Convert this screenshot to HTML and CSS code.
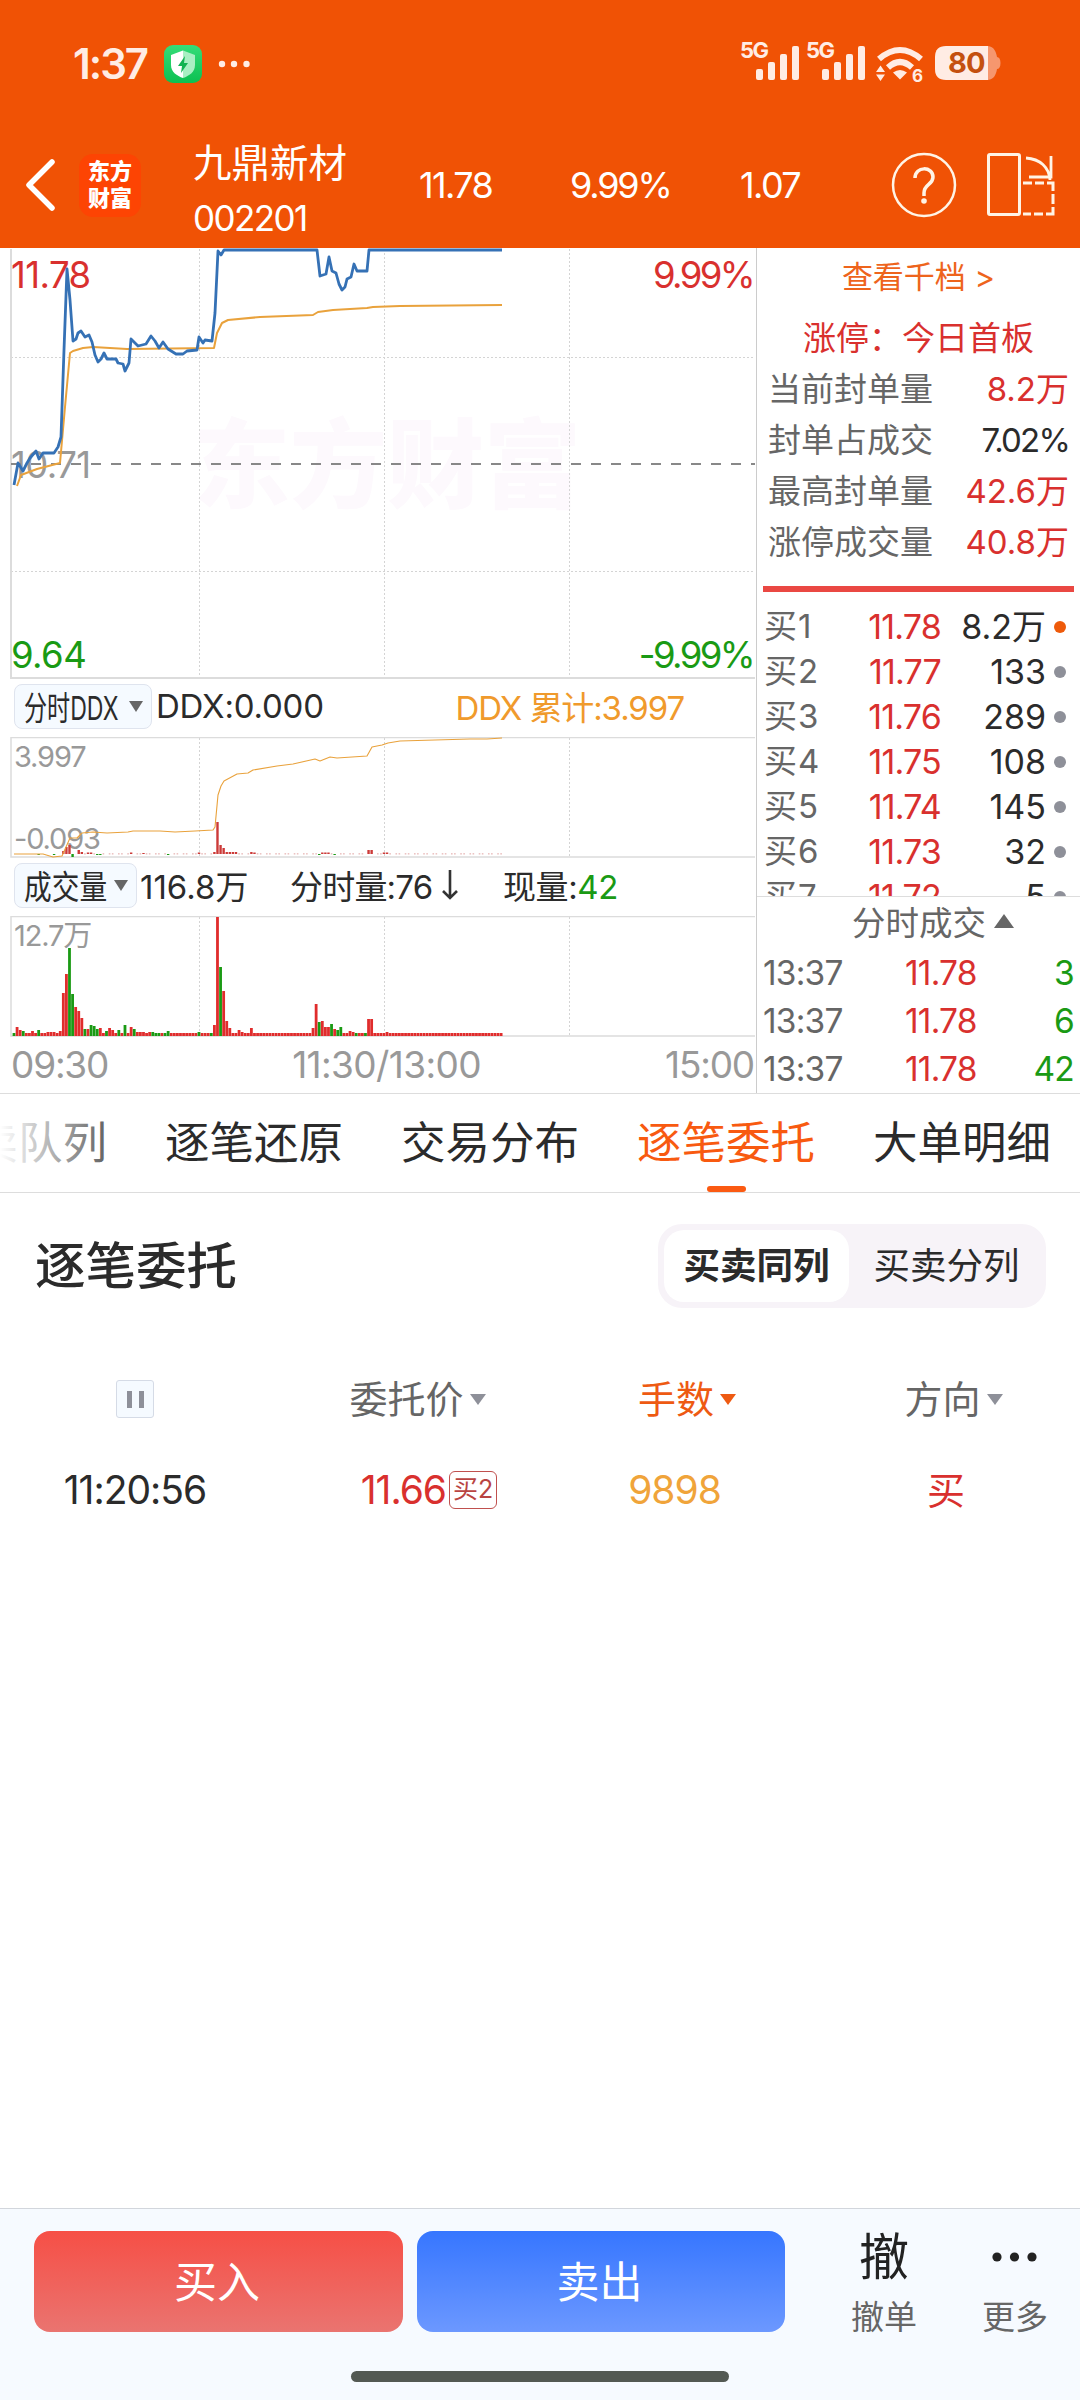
FILE: index.html
```html
<!DOCTYPE html>
<html lang="zh-CN">
<head>
  <meta charset="UTF-8">
  <meta name="viewport" content="width=device-width, initial-scale=1.0">
  <title>九鼎新材 002201</title>
  <link rel="stylesheet" href="styles.css">
</head>
<body>
  <div class="statusbar">
    <span class="statusbar__time">1:37</span>
    <svg class="statusbar__shield" width="38" height="38" viewBox="0 0 38 38">
      <defs>
        <linearGradient id="shield-bg" x1="0" y1="0" x2="0" y2="1">
          <stop offset="0" stop-color="#35dc78"/>
          <stop offset="1" stop-color="#0cc051"/>
        </linearGradient>
      </defs>
      <rect width="38" height="38" rx="9" fill="url(#shield-bg)"/>
      <path d="M19 5.500L31 10v10c0 7-6 11-12 13z" fill="#a9efc3"/>
      <path d="M19 5.500L7 10v10c0 7 6 11 12 13z" fill="#fff"/>
      <path d="M21 11l-7 10h4l-1 7 7-10h-4z" fill="#12b352"/>
    </svg>
    <svg class="statusbar__dots" width="32" height="8" viewBox="0 0 32 8" fill="#ffece4">
      <circle cx="4" cy="4" r="3.200"/><circle cx="16" cy="4" r="3.200"/><circle cx="28.500" cy="4" r="3.200"/>
    </svg>
    <svg class="statusbar__system" width="270" height="48" viewBox="735 38 270 48" fill="#ffece4">
      <text class="net" x="740" y="58">5G</text>
      <rect x="756" y="69" width="7" height="11" rx="2"/>
      <rect x="768" y="62" width="7" height="18" rx="2"/>
      <rect x="780" y="54" width="7" height="26" rx="2"/>
      <rect x="792" y="46" width="7" height="34" rx="2"/>
      <text class="net" x="806" y="58">5G</text>
      <rect x="822" y="69" width="7" height="11" rx="2"/>
      <rect x="834" y="62" width="7" height="18" rx="2"/>
      <rect x="846" y="54" width="7" height="26" rx="2"/>
      <rect x="858" y="46" width="7" height="34" rx="2"/>
      <path d="M879 59q21-18 42 0M888 67.500q12-11 24 0" fill="none" stroke="#ffece4" stroke-width="6"/>
      <path d="M893 72.500q7-5 14 0l-7 7z"/>
      <path d="M876 72l4.500-6.500L885 72zM876 74.500l4.500 6.500 4.500-6.500z"/>
      <text class="wifi-gen" x="912" y="81.500">6</text>
      <path d="M988 46c6 1 8 5 9 11 2 0 3.500 2 3.500 6s-1.500 6-3.500 6c-1 6-3 10-9 11z" fill="#f6976e"/>
      <path d="M946 46h42v34h-42q-11 0-11-11v-12q0-11 11-11z"/>
      <text class="battery" x="948" y="73">80</text>
    </svg>
  </div>

  <div class="header">
    <svg class="header__back" width="32" height="56" viewBox="0 0 32 56">
      <path d="M28 5L5 28l23 23" fill="none" stroke="#fff" stroke-width="5.500" stroke-linecap="round" stroke-linejoin="round"/>
    </svg>
    <div class="header__logo">东方<br>财富</div>
    <div class="header__stock">
      <div class="header__name">九鼎新材</div>
      <div class="header__code">002201</div>
    </div>
    <span class="header__price">11.78</span>
    <span class="header__percent">9.99%</span>
    <span class="header__change">1.07</span>
    <svg class="header__help" width="66" height="66" viewBox="0 0 66 66" fill="none" stroke="#fff4e6" stroke-width="2.500">
      <circle cx="33" cy="33" r="31"/>
      <path d="M24 26c0-12 18-12 18-1 0 8-9 7-9 16v3" stroke-width="3.500"/>
      <circle cx="33" cy="49" r="2.800" fill="#fff4e6" stroke="none"/>
    </svg>
    <svg class="header__rotate" width="70" height="66" viewBox="0 0 70 66" fill="none" stroke="#fff4e6" stroke-width="3">
      <rect x="2.500" y="2.500" width="31" height="60" rx="1.500"/>
      <path d="M40 6c14 1 23 9 24 22M43 25h22V4" stroke-width="2.800"/>
      <path d="M37 31h9M49 31h9M61 31h6v8M67 42v10M67 55v7h-7M57 62h-9M45 62h-8"/>
    </svg>
  </div>

  <div class="quote">
    <div class="charts">
      <svg class="chart" width="756" height="431" viewBox="0 248 756 431">
        <text class="watermark" x="193" y="500" textLength="388">东方财富</text>
        <path class="grid" d="M199.500 249v428M384.500 249v428M569.500 249v428M11 357.500h744M11 571.500h744"/>
        <path class="frame" d="M11 249v429h744"/>
        <text class="level up" x="11" y="288">11.78</text>
        <text class="level flat" x="11" y="478">10.71</text>
        <text class="level down" x="11" y="668">9.64</text>
        <text class="level percent up" x="753" y="288">9.99%</text>
        <text class="level percent down" x="753" y="668">-9.99%</text>
        <path d="M11 464h744" stroke="#888" stroke-width="2" stroke-dasharray="10 10"/>
        <polyline class="average" points="17,486 21,475 37,469 60,463 65,407 70,353 73,351 83,348 93,347 127,349 214,348 217,333 222,323 228,320 260,317 313,315 318,312 333,310 367,308 373,307 400,306 502,305"/>
        <polyline class="price" points="14,485 18,463 23,471 27,463 30,458 36,451 39,459 43,453 54,453 58,447 61,437 64,350 67,269 70,300 73,341 76,339 78,333 81,331 85,337 89,335 92,342 95,355 98,362 101,359 104,353 107,359 116,359 118,363 123,364 125,371 129,363 131,339 138,346 146,344 151,336 155,341 159,348 163,342 168,349 176,354 183,354 187,351 197,350 199,337 203,343 205,340 212,341 215,313 218,251 221,255 224,250 317,250 320,276 326,274 329,257 332,271 336,273 339,284 342,290 345,287 347,279 351,277 354,264 357,271 367,271 369,250 502,250"/>
      </svg>

      <div class="indicator">
        <div class="chip chip--ddx"><span class="chip__text">分时DDX</span><i class="caret"></i></div>
        <span class="indicator__ddx">DDX:0.000</span>
        <span class="indicator__sum">DDX 累计:3.997</span>
      </div>

      <svg class="chart" width="756" height="121" viewBox="0 737 756 121">
        <path class="grid" d="M199.500 738v119M384.500 738v119M569.500 738v119"/>
        <path class="frame frame--thin" d="M755 737.500H11V857h744"/>
        <text class="scale" x="14" y="767">3.997</text>
        <text class="scale" x="14" y="849">-0.093</text>
        <g id="ddx-bars"></g>
        <polyline class="average average--thin" points="14,854 43,854 53,857 62,856 70,838 77,838 82,833 93,832 107,833 128,832 133,831 160,831 175,832 195,831 213,830 215,827 218,795 221,786 224,781 237,774 248,773 253,770 277,766 293,764 315,759 320,761 330,757 337,758 367,756 372,747 382,745 388,743 400,741 470,739 487,739 502,738"/>
      </svg>

      <div class="indicator">
        <div class="chip chip--volume"><span class="chip__text">成交量</span><i class="caret"></i></div>
        <span class="indicator__total">116.8万</span>
        <span class="indicator__minute">分时量:76<svg width="18" height="32" viewBox="0 0 18 32" fill="none" stroke="#333" stroke-width="2.600"><path d="M9 1v28M2 22l7 7 7-7"/></svg></span>
        <span class="indicator__current">现量:<b>42</b></span>
      </div>

      <svg class="chart" width="756" height="121" viewBox="0 916 756 121">
        <path class="grid" d="M199.500 917v119M384.500 917v119M569.500 917v119"/>
        <path class="frame frame--thin" d="M755 916.500H11V1036h744"/>
        <text class="scale" x="14" y="946">12.7万</text>
        <g id="volume-bars"></g>
      </svg>

      <div class="axis"><span>09:30</span><span>11:30/13:00</span><span>15:00</span></div>
    </div>

    <div class="depth">
      <div class="depth__more">查看千档 &gt;</div>
      <div class="depth__limit">涨停：今日首板</div>
      <div class="stat"><span>当前封单量</span><span class="up">8.2万</span></div>
      <div class="stat"><span>封单占成交</span><span class="tight">7.02%</span></div>
      <div class="stat"><span>最高封单量</span><span class="up">42.6万</span></div>
      <div class="stat"><span>涨停成交量</span><span class="up">40.8万</span></div>
      <div class="depth__ratio"></div>
      <div class="book">
        <div class="book__row book__row--active"><span>买1</span><span>11.78</span><span>8.2万</span><i></i></div>
        <div class="book__row"><span>买2</span><span>11.77</span><span>133</span><i></i></div>
        <div class="book__row"><span>买3</span><span>11.76</span><span>289</span><i></i></div>
        <div class="book__row"><span>买4</span><span>11.75</span><span>108</span><i></i></div>
        <div class="book__row"><span>买5</span><span>11.74</span><span>145</span><i></i></div>
        <div class="book__row"><span>买6</span><span>11.73</span><span>32</span><i></i></div>
        <div class="book__row"><span>买7</span><span>11.72</span><span>5</span><i></i></div>
      </div>
      <div class="ticks__title">分时成交<i></i></div>
      <div class="tick"><span>13:37</span><span>11.78</span><span>3</span></div>
      <div class="tick"><span>13:37</span><span>11.78</span><span>6</span></div>
      <div class="tick"><span>13:37</span><span>11.78</span><span>42</span></div>
    </div>
  </div>

  <div class="tabs">
    <span class="tab">买卖队列</span>
    <span class="tab">逐笔还原</span>
    <span class="tab">交易分布</span>
    <span class="tab is-active">逐笔委托</span>
    <span class="tab">大单明细</span>
  </div>

  <div class="orders">
    <div class="orders__bar">
      <h2>逐笔委托</h2>
      <div class="segment">
        <span class="segment__item is-active">买卖同列</span>
        <span class="segment__item">买卖分列</span>
      </div>
    </div>
    <div class="orders__row orders__row--head">
      <span><span class="pause"></span></span>
      <span>委托价<i class="caret"></i></span>
      <span class="is-sorted">手数<i class="caret"></i></span>
      <span>方向<i class="caret"></i></span>
    </div>
    <div class="orders__row">
      <span>11:20:56</span>
      <span class="up">11.66<em class="badge">买2</em></span>
      <span class="lots">9898</span>
      <span class="side up">买</span>
    </div>
  </div>

  <div class="footer">
    <div class="footer__actions">
      <button class="button button--buy">买入</button>
      <button class="button button--sell">卖出</button>
      <div class="action"><span class="action__icon">撤</span>撤单</div>
      <div class="action">
        <span class="action__icon"><svg width="48" height="12" viewBox="0 0 48 12" fill="#222"><circle cx="6" cy="6" r="4.600"/><circle cx="23.500" cy="6" r="4.600"/><circle cx="41" cy="6" r="4.600"/></svg></span>更多
      </div>
    </div>
    <div class="footer__home"></div>
  </div>
  <script src="charts.js"></script>
</body>
</html>
```
FILE: styles.css
```css
* {
  box-sizing: border-box;
}

body {
  display: flex;
  flex-direction: column;
  width: 1080px;
  height: 2400px;
  margin: 0;
  overflow: hidden;
  background: #fff;
  color: #2b2b2b;
  font-family: Inter, "Noto Sans CJK SC", sans-serif;
  white-space: nowrap;
}

svg {
  display: block;
  flex: none;
}

.up {
  color: #d9302e;
  fill: #d9302e;
}

.down {
  fill: #1a9a14;
}

.flat {
  fill: #999;
}

/* status bar */

.statusbar {
  display: flex;
  align-items: center;
  height: 111px;
  padding: 16px 75px 0 73px;
  background: #f05205;
}

.statusbar__time {
  width: 91px;
  color: #ffece4;
  font-size: 42px;
  font-weight: 600;
  letter-spacing: -2px;
}

.statusbar__dots {
  margin-left: 16px;
}

.statusbar__system {
  margin-left: auto;
  margin-top: -3px;
}

.net {
  font-size: 22px;
  font-weight: 700;
  letter-spacing: -1.5px;
}

.wifi-gen {
  font-size: 17px;
  font-weight: 700;
}

.battery {
  fill: #c4500f;
  font-size: 29px;
  font-weight: 700;
  letter-spacing: -1px;
}

/* header */

.header {
  display: grid;
  grid-template-columns: 55px 114px 226px 151px 170px 151px 95px 70px;
  align-items: center;
  height: 137px;
  padding: 11px 0 0 24px;
  background: #f05205;
  color: #fff;
  font-size: 36px;
  letter-spacing: -1.6px;
}

.header__percent {
  letter-spacing: -2.2px;
}

.header__logo {
  width: 62px;
  height: 63px;
  padding-top: 4px;
  border-radius: 14px;
  background: #fd4403;
  font-size: 22px;
  font-weight: 900;
  line-height: 27px;
  letter-spacing: 0;
  text-align: center;
}

.header__name {
  height: 56px;
  font-size: 38.5px;
  line-height: 56px;
  letter-spacing: 0;
}

.header__code {
  height: 54px;
  font-size: 35px;
  line-height: 54px;
}

.header__stock {
  margin-top: 9px;
}

/* quote */

.quote {
  display: flex;
  height: 846px;
  border-bottom: 1px solid #ddd;
}

.charts {
  width: 756px;
}

.chart text {
  letter-spacing: -.04em;
}

.chart .watermark {
  fill: #fdf9fd;
  font-size: 97px;
  font-weight: 900;
  letter-spacing: 0;
}

.grid {
  fill: none;
  stroke: #d4d4d4;
  stroke-dasharray: 2 2;
}

.frame {
  fill: none;
  stroke: #dcdcdc;
  stroke-width: 2;
}

.frame--thin {
  stroke-width: 1.5;
}

.chart .level {
  font-size: 36.5px;
  letter-spacing: -.6px;
}

.chart .percent {
  letter-spacing: -2.6px;
  text-anchor: end;
}

.scale {
  fill: #999;
  font-size: 29px;
}

.price {
  fill: none;
  stroke: #3571b5;
  stroke-width: 2.8;
  stroke-linejoin: round;
}

.average {
  fill: none;
  stroke: #e9a23c;
  stroke-width: 2;
  stroke-linejoin: round;
}

.average--thin {
  stroke-width: 1.1;
}

.indicator {
  display: flex;
  align-items: center;
  height: 58px;
  padding: 0 72px 4px 14px;
  font-size: 33px;
}

.chip {
  display: flex;
  align-items: center;
  justify-content: space-between;
  height: 45px;
  padding: 0 8px 0 9px;
  border: 1px solid #dfe4ee;
  border-radius: 8px;
  background: #f5faff;
}

.chip--ddx {
  width: 138px;
}

.chip--volume {
  width: 123px;
}

.chip__text {
  width: 84px;
  transform-origin: left;
}

.chip--ddx .chip__text {
  transform: scaleX(.7);
}

.chip--volume .chip__text {
  transform: scaleX(.84);
}

.caret {
  display: inline-block;
  border: 7px solid transparent;
  border-top: 11px solid #666;
  border-bottom: 0;
}

.indicator__ddx {
  margin-left: 4px;
  letter-spacing: -.2px;
}

.indicator__sum {
  margin-left: auto;
  color: #f09a2c;
  letter-spacing: -1.1px;
}

.indicator__total {
  width: 150px;
  margin-left: 3px;
}

.indicator__minute {
  display: flex;
  align-items: center;
  width: 213px;
  letter-spacing: -.8px;
}

.indicator__minute svg {
  margin-left: 9px;
}

.indicator__current {
  letter-spacing: -.4px;
}

.indicator__current b {
  color: #1a9a14;
  font-weight: 400;
}

.axis {
  display: flex;
  justify-content: space-between;
  padding: 0 2px 0 11px;
  color: #999;
  font-size: 37px;
  line-height: 56px;
  letter-spacing: -1.2px;
}

.axis span:nth-child(2) {
  letter-spacing: -.6px;
}

.depth {
  width: 324px;
  border-left: 1px solid #ccc;
  font-size: 33px;
}

.depth__more {
  height: 60px;
  color: #ee641c;
  font-size: 31px;
  line-height: 58px;
  text-align: center;
}

.depth__limit {
  height: 56px;
  color: #d9302e;
  line-height: 60px;
  text-align: center;
}

.stat {
  display: flex;
  justify-content: space-between;
  padding: 0 11px;
  line-height: 51px;
}

.stat span:first-child {
  color: #666;
}

.stat .tight {
  letter-spacing: -1.8px;
}

.depth__ratio {
  height: 6px;
  margin: 18px 6px 0;
  background: #ea4843;
}

.book {
  height: 305px;
  padding-top: 12px;
  border-bottom: 1px solid #ddd;
  overflow: hidden;
}

.book__row {
  display: grid;
  grid-template-columns: 78px 99px 105px 12px;
  align-items: center;
  height: 45px;
  padding-left: 7px;
  line-height: 45px;
}

.book__row span:nth-child(1) {
  color: #666;
  letter-spacing: 1px;
}

.book__row span:nth-child(2) {
  color: #d9302e;
  font-size: 34px;
  letter-spacing: -.8px;
  text-align: right;
}

.book__row span:nth-child(3) {
  font-size: 34px;
  text-align: right;
}

.book__row i {
  width: 12px;
  height: 12px;
  margin-left: 8px;
  border-radius: 50%;
  background: #8e9099;
}

.book__row--active i {
  background: #ee5a0a;
}

.ticks__title {
  display: flex;
  align-items: center;
  justify-content: center;
  height: 52px;
  padding: 0 0 5px 29px;
  color: #666;
  font-size: 33.5px;
}

.ticks__title i {
  margin-left: 8px;
  border: 10px solid transparent;
  border-top: 0;
  border-bottom: 14px solid #666;
}

.tick {
  display: grid;
  grid-template-columns: 142px 90px 1fr;
  padding: 0 6px;
  color: #666;
  font-size: 33.5px;
  line-height: 48px;
  letter-spacing: -.8px;
}

.tick span:nth-child(2) {
  color: #d9302e;
}

.tick span:nth-child(3) {
  color: #1a9a14;
  text-align: right;
}

/* tabs */

.tabs {
  position: relative;
  display: flex;
  flex: none;
  justify-content: flex-end;
  gap: 58px;
  height: 99px;
  padding-right: 29px;
  border-bottom: 1px solid #ddd;
  font-size: 44.500px;
  line-height: 98px;
}

.tabs::before {
  content: "";
  position: absolute;
  left: 0;
  top: 0;
  z-index: 1;
  width: 130px;
  height: 96px;
  background: linear-gradient(90deg, #fff, rgba(255, 255, 255, .1));
}

.tab {
  position: relative;
}

.tab.is-active {
  color: #f85a10;
}

.tab.is-active::after {
  content: "";
  position: absolute;
  left: 50%;
  bottom: 0;
  width: 39px;
  height: 6px;
  margin-left: -19px;
  border-radius: 3px;
  background: #fb5a12;
}

/* orders */

.orders {
  flex: 1;
}

.orders__bar {
  display: flex;
  align-items: center;
  justify-content: space-between;
  padding: 31px 34px 0 35px;
}

.orders__bar h2 {
  margin: 0;
  font-size: 50.5px;
  font-weight: 500;
  line-height: 84px;
}

.segment {
  display: flex;
  height: 84px;
  padding: 6px;
  border-radius: 24px;
  background: #f7f3f8;
  font-size: 36.5px;
  line-height: 72px;
  text-align: center;
}

.segment__item {
  width: 185px;
}

.segment__item + .segment__item {
  width: 191px;
  padding-left: 4px;
}

.segment__item.is-active {
  border-radius: 20px;
  background: #fff;
  font-weight: 700;
}

.orders__row {
  display: grid;
  grid-template-columns: 270px 293px 230px 1fr;
  height: 91px;
  font-size: 39px;
  letter-spacing: -1px;
}

.orders__row > span {
  display: flex;
  align-items: center;
  justify-content: center;
}

.orders__row > span:nth-child(2) {
  padding-left: 25px;
}

.orders__row > span:last-child {
  padding-left: 18px;
}

.orders__row .side {
  padding-bottom: 4px;
  font-size: 38px;
}

.orders__row--head {
  margin-top: 45px;
  color: #666;
  font-size: 38px;
  letter-spacing: 0;
}

.orders__row--head > span {
  padding-bottom: 4px;
}

.orders__row--head > span:first-child {
  padding-bottom: 0;
}

.orders__row--head > span:nth-child(2) {
  padding-left: 2px;
}

.orders__row--head > span:nth-child(3) {
  padding-left: 18px;
}

.orders__row--head > span:last-child {
  padding-left: 34px;
}

.orders__row .caret {
  margin: 6px 0 0 6px;
  border-width: 11px 8.500px 0;
  border-top-color: #8e9099;
}

.orders__row .is-sorted {
  color: #ee5a12;
}

.orders__row .is-sorted .caret {
  border-top-color: #ee5a12;
}

.pause {
  width: 38px;
  height: 38px;
  border: 1px solid #d5dbe6;
  border-radius: 3px;
  background:
    linear-gradient(#8e9099, #8e9099) 10px 10px / 5px 17px no-repeat,
    linear-gradient(#8e9099, #8e9099) 22px 10px / 5px 17px no-repeat,
    #f5faff;
}

.orders__row .lots {
  padding-right: 7px;
  color: #f0a43a;
}

.badge {
  height: 38px;
  margin-left: 3px;
  padding: 0 3px;
  border: 1px solid #c0504e;
  border-radius: 6px;
  color: #b94442;
  font-size: 25px;
  font-style: normal;
  line-height: 35px;
  letter-spacing: 0;
}

/* footer */

.footer {
  height: 192px;
  border-top: 1px solid #d2d6dc;
  background: #f6faff;
}

.footer__actions {
  display: grid;
  grid-template-columns: 369px 368px 96px 96px;
  column-gap: 14px;
  height: 124px;
  padding: 22px 0 0 34px;
}

.button {
  height: 101px;
  padding: 0 3px 6px 0;
  border: 0;
  border-radius: 16px;
  color: #fff;
  font: inherit;
  font-size: 43px;
}

.button--buy {
  background: linear-gradient(#f64f46, #ea7470);
}

.button--sell {
  background: linear-gradient(#3676ff, #6c98ff);
}

.action {
  display: flex;
  flex-direction: column;
  align-items: center;
  margin-left: 37px;
  color: #666;
  font-size: 33px;
  line-height: 48px;
}

.action + .action {
  margin-left: 58px;
  margin-right: -58px;
}

.action:nth-child(3) {
  margin-right: -37px;
}

.action__icon {
  display: flex;
  align-items: center;
  height: 52px;
  margin-bottom: 10px;
  color: #222;
  font-size: 50px;
}

.footer__home {
  width: 378px;
  height: 11px;
  margin: 38px auto 0;
  border-radius: 6px;
  background: #535953;
}
```
FILE: charts.js
```js
var RED = '#e02c2c';
var GREEN = '#1a9a14';
var START = 14;
var STEP = 3.083;

// bar heights by minute, the rest of the session is flat
var volume = {
  0: 3, 1: 9, 2: 6, 3: 5, 6: 5, 8: 6, 11: 4, 12: 4, 13: 4, 15: 5,
  16: 43, 17: 62, 18: 88, 19: 42, 20: 29, 21: 25, 22: 18, 23: 7, 24: 7,
  25: 11, 26: 10, 27: 7, 28: 8, 30: 5, 31: 8, 32: 6, 34: 6, 36: 11,
  38: 9, 39: 7, 40: 4, 41: 4, 42: 4, 44: 4, 45: 4, 50: 5, 60: 4,
  65: 11, 66: 119, 67: 69, 68: 45, 69: 15, 70: 8, 73: 6, 74: 4, 77: 8,
  97: 8, 98: 32, 99: 14, 100: 15, 101: 9, 102: 9, 103: 12, 104: 7,
  105: 6, 106: 9, 109: 5, 110: 4, 115: 17, 116: 17, 121: 4
};
var falling = [0, 3, 8, 18, 19, 23, 25, 26, 27, 30, 34, 36, 39, 45, 46, 47, 49, 50, 60, 64, 67, 99, 103, 105, 106, 111, 114];

var ddx = {
  16: 3, 17: 7, 18: 9, 21: 4, 22: 2, 24: 1.5, 25: 1.5, 38: 1.5, 42: 1, 60: 1.5, 65: 2,
  66: 32, 67: 9, 68: 6, 69: 2, 70: 2, 71: 2, 72: 2, 77: 2, 78: 1.5,
  100: 1.5, 101: 1.5, 102: 1.5, 115: 4, 116: 4, 120: 1.5, 121: 1.5
};
var ddxFalling = [8, 13, 19, 27, 28, 50, 99, 104];

function bar(x, y, width, height, color) {
  return '<rect x="' + (x - width / 2).toFixed(2) + '" y="' + y + '" width="' + width +
    '" height="' + height + '" fill="' + color + '"/>';
}

var volumeBars = '';
var ddxBars = '';

for (var i = 0; i <= 158; i++) {
  var x = START + i * STEP;
  var h = volume[i] || 3;
  volumeBars += bar(x, 1036 - h, 2.8, h, falling.indexOf(i) > -1 ? GREEN : RED);

  if (ddxFalling.indexOf(i) > -1) {
    ddxBars += bar(x, 854, 2.4, i === 19 ? 3 : 1, GREEN);
  } else if (ddx[i]) {
    ddxBars += bar(x, 854 - ddx[i], 2.4, ddx[i], '#cc3a38');
  } else if (i > 22 && i % 3) {
    ddxBars += bar(x, 853.5, 1.6, .8, '#d98a88');
  }
}

document.getElementById('volume-bars').innerHTML = volumeBars;
document.getElementById('ddx-bars').innerHTML = ddxBars;
```
